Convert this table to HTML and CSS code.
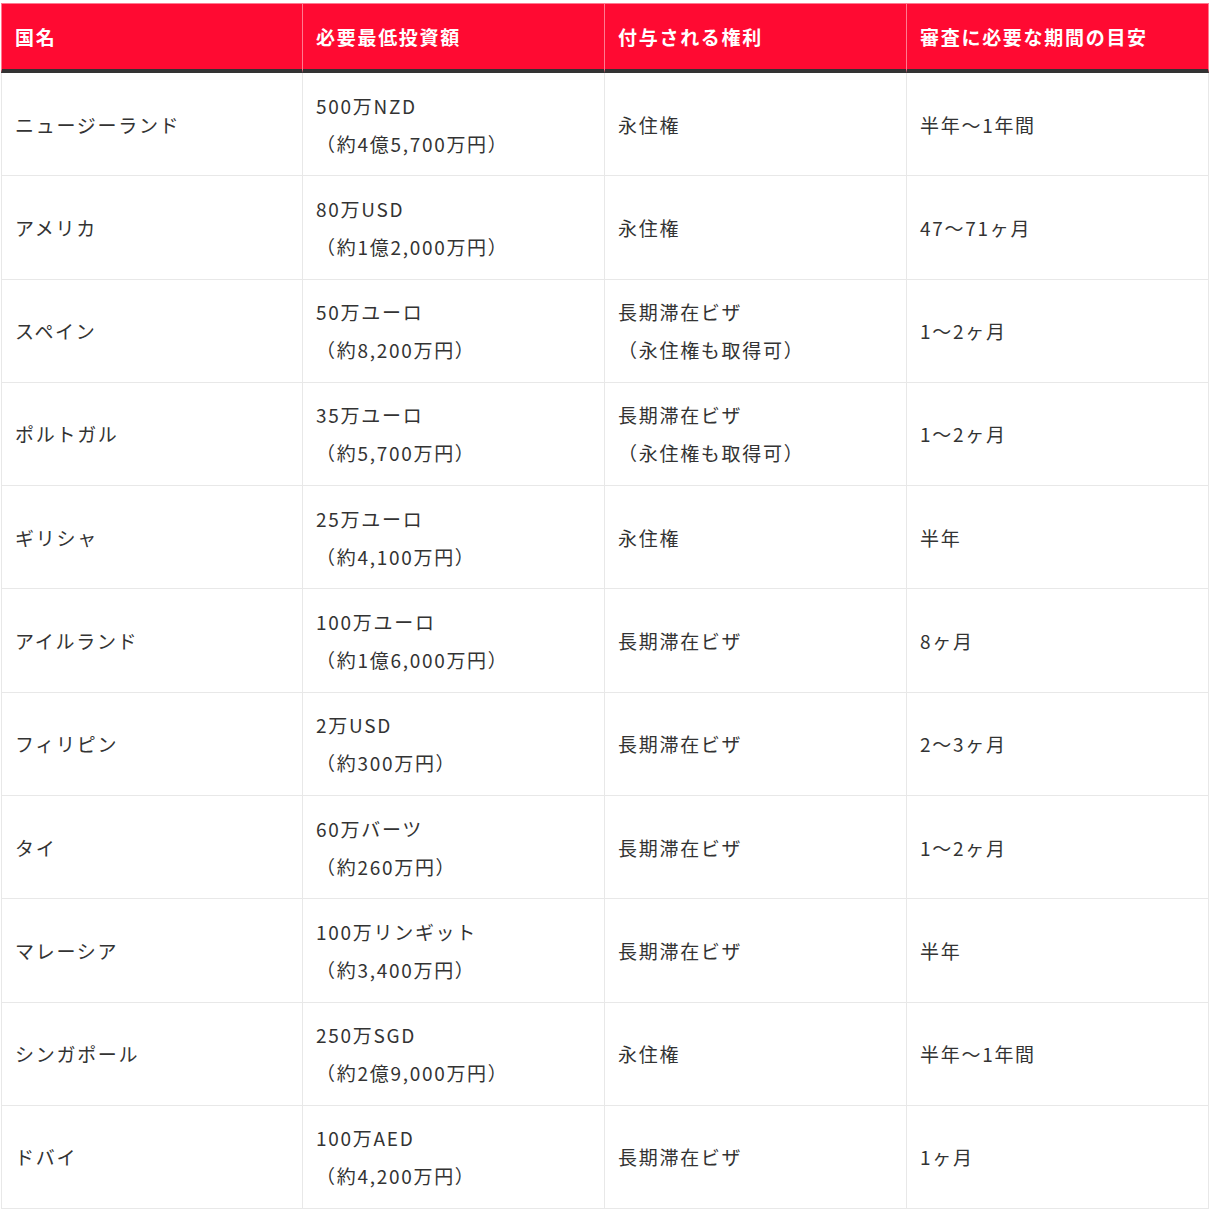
FILE: index.html
```html
<!DOCTYPE html>
<html lang="ja">
<head>
<meta charset="utf-8">
<title>投資移住 比較表</title>
<link rel="stylesheet" href="styles.css">
</head>
<body>
<div class="wrap">
<table class="cmp">
<thead>
<tr><th>国名</th><th>必要最低投資額</th><th>付与される権利</th><th>審査に必要な期間の目安</th></tr>
</thead>
<tbody>
<tr><td>ニュージーランド</td><td>500万NZD<br>（約4億5,700万円）</td><td>永住権</td><td>半年〜1年間</td></tr>
<tr><td>アメリカ</td><td>80万USD<br>（約1億2,000万円）</td><td>永住権</td><td>47〜71ヶ月</td></tr>
<tr><td>スペイン</td><td>50万ユーロ<br>（約8,200万円）</td><td>長期滞在ビザ<br>（永住権も取得可）</td><td>1〜2ヶ月</td></tr>
<tr><td>ポルトガル</td><td>35万ユーロ<br>（約5,700万円）</td><td>長期滞在ビザ<br>（永住権も取得可）</td><td>1〜2ヶ月</td></tr>
<tr><td>ギリシャ</td><td>25万ユーロ<br>（約4,100万円）</td><td>永住権</td><td>半年</td></tr>
<tr><td>アイルランド</td><td>100万ユーロ<br>（約1億6,000万円）</td><td>長期滞在ビザ</td><td>8ヶ月</td></tr>
<tr><td>フィリピン</td><td>2万USD<br>（約300万円）</td><td>長期滞在ビザ</td><td>2〜3ヶ月</td></tr>
<tr><td>タイ</td><td>60万バーツ<br>（約260万円）</td><td>長期滞在ビザ</td><td>1〜2ヶ月</td></tr>
<tr><td>マレーシア</td><td>100万リンギット<br>（約3,400万円）</td><td>長期滞在ビザ</td><td>半年</td></tr>
<tr><td>シンガポール</td><td>250万SGD<br>（約2億9,000万円）</td><td>永住権</td><td>半年〜1年間</td></tr>
<tr><td>ドバイ</td><td>100万AED<br>（約4,200万円）</td><td>長期滞在ビザ</td><td>1ヶ月</td></tr>
</tbody>
</table>
</div>
</body>
</html>
```
FILE: styles.css
```css
html, body {
  margin: 0;
  padding: 0;
  background: #ffffff;
}
.wrap {
  padding: 3px 0 0 1px;
}
.cmp {
  width: 1208px;
  table-layout: fixed;
  border-collapse: separate;
  border-spacing: 0;
  font-family: "Noto Sans CJK JP", "Noto Sans", sans-serif;
  font-size: 19px;
  letter-spacing: 0.09em;
  color: #333333;
}
.cmp th {
  background: #ff0a32;
  color: #ffffff;
  font-weight: 700;
  text-align: left;
  line-height: 38px;
  padding: 14px 13px 13px;
  border-top: 1px solid #ff7a90;
  border-right: 1px solid #ff7a90;
  border-bottom: 4px solid #333333;
}
.cmp th:first-child {
  border-left: 1px solid #ff7a90;
}
.cmp td {
  vertical-align: middle;
  line-height: 38px;
  padding: 13.6px 13px 12.7px;
  border-right: 1px solid #e8e8e8;
  border-bottom: 1px solid #e8e8e8;
}
.cmp td:first-child {
  border-left: 1px solid #e8e8e8;
}
```
